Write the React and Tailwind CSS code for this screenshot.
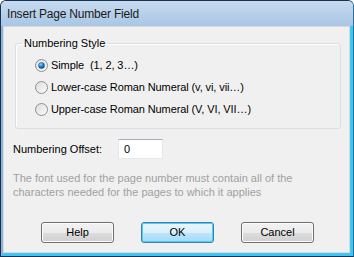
import { useState } from "react";

const FONT = { fontFamily: '"Liberation Sans", Arial, sans-serif' };

function Radio({ checked }) {
  return (
    <svg width="13" height="13" viewBox="0 0 13 13" className="shrink-0">
      <defs>
        <linearGradient id={checked ? "rg-on" : "rg-off"} x1="0" y1="0" x2="1" y2="1">
          <stop offset="0" stopColor="#dcdcdc" />
          <stop offset="1" stopColor="#fbfbfb" />
        </linearGradient>
        <radialGradient id="dot" cx="0.4" cy="0.35" r="0.7">
          <stop offset="0" stopColor="#8ad8f8" />
          <stop offset="0.5" stopColor="#1d7cc4" />
          <stop offset="1" stopColor="#0c3f73" />
        </radialGradient>
      </defs>
      <circle cx="6.5" cy="6.5" r="6" fill={`url(#${checked ? "rg-on" : "rg-off"})`} stroke="#8e8f8f" />
      {checked && <circle cx="6.5" cy="6.5" r="3.2" fill="url(#dot)" />}
    </svg>
  );
}

function DialogButton({ children, primary }) {
  return (
    <button
      type="button"
      className={`h-[21px] w-[73px] rounded-[3px] border text-[11px] text-black ${
        primary
          ? "border-[#3c7fb1] bg-[linear-gradient(#eaf6fd_0%,#d9f0fc_50%,#bee6fd_51%,#a7d9f5_100%)] shadow-[inset_0_0_0_1px_#48d0f7]"
          : "border-[#707070] bg-[linear-gradient(#f2f2f2_0%,#ebebeb_50%,#dddddd_51%,#cfcfcf_100%)] shadow-[inset_0_0_0_1px_#fcfcfc]"
      }`}
    >
      {children}
    </button>
  );
}

export default function App() {
  const [style, setStyle] = useState("simple");
  const [offset, setOffset] = useState("0");

  const options = [
    { id: "simple", label: "Simple  (1, 2, 3…)" },
    { id: "lower", label: "Lower-case Roman Numeral (v, vi, vii…)" },
    { id: "upper", label: "Upper-case Roman Numeral (V, VI, VII…)" },
  ];

  return (
    <div style={FONT} className="flex h-[257px] w-[354px] flex-col overflow-hidden rounded-t-[6px] border border-[#1a3050] border-r-[#2a6f9a] bg-[#b1cbe7]">
      <div className="flex h-[25px] shrink-0 items-center bg-[linear-gradient(#c7dbef,#a9c6e5)] pl-[6px] text-[12px] tracking-[-0.2px] text-[#1a1a1a]">
        Insert Page Number Field
      </div>

      <div className="flex min-h-0 flex-1 border-b-[3px] border-l-[2px] border-r-[3px] border-b-[#3cc7f4] border-l-[#8fb2d9] border-r-[#3cc7f4]">
        <div className="flex flex-1 flex-col border border-[#dadada] bg-[#f0f0f0] text-[11px] text-black">
          <fieldset className="ml-[11px] mt-[10px] w-[326px] rounded-[3px] border border-[#d5dfe5] pb-[12px] shadow-[inset_1px_1px_0_#fff]">
            <legend className="ml-[6px] px-[2px] leading-[13px]">Numbering Style</legend>
            <div className="flex flex-col gap-[9px] pl-[19px] pt-[9px]">
              {options.map((o) => (
                <label key={o.id} className="flex h-[13px] items-center gap-[3px] leading-[13px] tracking-[-0.1px]" onClick={() => setStyle(o.id)}>
                  <Radio checked={style === o.id} />
                  <span className="whitespace-pre">{o.label}</span>
                </label>
              ))}
            </div>
          </fieldset>

          <div className="ml-[9px] mt-[10px] flex h-[20px] items-center">
            <span className="w-[105px]">Numbering Offset:</span>
            <input
              value={offset}
              onChange={(e) => setOffset(e.target.value)}
              className="h-[20px] w-[45px] border border-[#e3e9ef] border-t-[#abadb3] bg-white px-[5px] text-[11px] outline-none"
            />
          </div>

          <p className="ml-[9px] mt-[12px] leading-[14px] text-[#a0a0a0]">
            The font used for the page number must contain all of the
            <br />
            characters needed for the pages to which it applies
          </p>

          <div className="mt-auto mb-[9px] flex gap-[27px] pl-[37px]">
            <DialogButton>Help</DialogButton>
            <DialogButton primary>OK</DialogButton>
            <DialogButton>Cancel</DialogButton>
          </div>
        </div>
      </div>
    </div>
  );
}
